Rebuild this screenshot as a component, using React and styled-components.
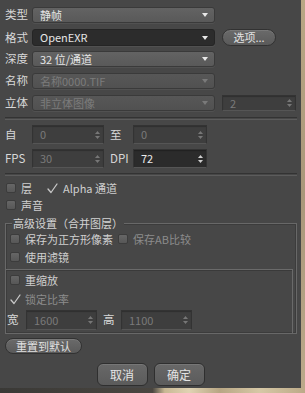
import React from "react";
import styled, { createGlobalStyle } from "styled-components";

const Global = createGlobalStyle`
  html, body { margin: 0; padding: 0; }
  body {
    background: linear-gradient(90deg, #3b3a37 0%, #4a4741 45%, #c9b994 55%, #bda983 80%, #cdbd9a 100%);
    font-family: "Noto Sans CJK SC", "Noto Sans", sans-serif;
    width: 305px; height: 393px; overflow: hidden;
  }
`;

const Page = styled.div`
  width: 305px;
  height: 393px;
  display: flex;
  align-items: flex-start;
`;

const Dialog = styled.div`
  width: 301px;
  height: 388px;
  box-sizing: border-box;
  background: #474747;
  padding: 7px 4px 0 5px;
  display: flex;
  flex-direction: column;
  color: #d6d6d6;
  font-size: 11px;
`;

const Side = styled.div`
  width: 4px;
  height: 388px;
  background: linear-gradient(180deg, #b9a784, #a9977a 50%, #bba98a);
`;

const Row = styled.div`
  display: flex;
  align-items: center;
  height: ${(p) => p.$h || 16}px;
  margin-top: ${(p) => p.$mt || 0}px;
  flex-shrink: 0;
`;

const Label = styled.div`
  width: ${(p) => p.$w || 27}px;
  flex-shrink: 0;
  font-size: 11.5px;
  line-height: 1;
  color: #d8d8d8;
  white-space: nowrap;
  margin-left: ${(p) => p.$ml || 0}px;
`;

const Select = styled.div`
  position: relative;
  width: ${(p) => p.$w || 183}px;
  height: 100%;
  box-sizing: border-box;
  border-radius: 3px;
  border: 1px solid ${(p) => (p.$dark ? "#252525" : "#3a3a3a")};
  background: ${(p) =>
    p.$dark
      ? "#2c2c2c"
      : p.$disabled
      ? "linear-gradient(180deg, #575757, #515151)"
      : "linear-gradient(180deg, #636363, #595959)"};
  box-shadow: 0 1px 0 rgba(255,255,255,0.06);
  display: flex;
  align-items: center;
  padding-left: 7px;
  color: ${(p) => (p.$disabled ? "#7c7c7c" : "#e6e6e6")};
  font-size: 11px;
  line-height: 1;
  &::after {
    content: "";
    position: absolute;
    right: 6px;
    top: 50%;
    margin-top: -2px;
    border-left: 3.5px solid transparent;
    border-right: 3.5px solid transparent;
    border-top: 4px solid ${(p) => (p.$disabled ? "#7a7a7a" : "#e8e8e8")};
  }
`;

const PillButton = styled.div`
  height: 100%;
  box-sizing: border-box;
  width: ${(p) => p.$w}px;
  margin-left: ${(p) => p.$ml || 0}px;
  border-radius: 9px;
  border: 1px solid #323232;
  background: linear-gradient(180deg, #6a6a6a, #5a5a5a);
  box-shadow: inset 0 1px 0 rgba(255,255,255,0.1);
  color: #e2e2e2;
  font-size: 11px;
  display: flex;
  align-items: center;
  justify-content: center;
  line-height: 1;
`;

const Field = styled.div`
  position: relative;
  width: ${(p) => p.$w}px;
  height: 100%;
  box-sizing: border-box;
  margin-left: ${(p) => p.$ml || 0}px;
  background: ${(p) => (p.$dark ? "#2b2b2b" : "#3e3e3e")};
  border: 1px solid #333;
  border-bottom-color: #555;
  box-shadow: inset 0 1px 1px rgba(0,0,0,0.25);
  display: flex;
  align-items: center;
  padding-left: 7px;
  color: ${(p) => (p.$dark ? "#ececec" : "#7a7a7a")};
  font-size: 11px;
  line-height: 1;
`;

const SpinWrap = styled.div`
  position: absolute;
  right: 3px;
  top: 50%;
  transform: translateY(-50%);
  display: flex;
`;

const Spin = ({ light }) => (
  <SpinWrap>
    <svg width="5" height="9" viewBox="0 0 5 9">
      <path d="M0 3.5 L2.5 0.5 L5 3.5 Z" fill={light ? "#cfcfcf" : "#777"} />
      <path d="M0 5.5 L2.5 8.5 L5 5.5 Z" fill={light ? "#cfcfcf" : "#777"} />
    </svg>
  </SpinWrap>
);

const Separator = styled.div`
  height: 1px;
  margin-top: ${(p) => p.$mt || 0}px;
  border-top: 1px solid #333;
  border-bottom: 1px solid #5c5c5c;
  margin-right: 0;
  flex-shrink: 0;
`;

const CheckRow = styled.div`
  display: flex;
  align-items: center;
  height: 14px;
  margin-top: ${(p) => p.$mt || 0}px;
  padding-left: ${(p) => p.$pl || 1}px;
  flex-shrink: 0;
`;

const Box = styled.div`
  width: 10px;
  height: 10px;
  box-sizing: border-box;
  border-radius: 2px;
  border: 1px solid #3c3c3c;
  background: linear-gradient(180deg, #666, #575757);
  flex-shrink: 0;
  margin-left: ${(p) => p.$ml || 0}px;
`;

const Tick = styled.div`
  width: 11px;
  height: 11px;
  flex-shrink: 0;
  margin-left: ${(p) => p.$ml || 0}px;
  display: flex;
`;

const CheckText = styled.span`
  margin-left: ${(p) => p.$ml || 5}px;
  font-size: 11px;
  line-height: 1;
  color: ${(p) => (p.$dim ? "#8c8c8c" : "#cfcfcf")};
  white-space: nowrap;
`;

const Check = ({ ml }) => (
  <Tick $ml={ml}>
    <svg width="11" height="11" viewBox="0 0 11 11">
      <path d="M1 6 L4 9.5 L10 1" fill="none" stroke="#c8c8c8" strokeWidth="1.3" strokeLinecap="round" strokeLinejoin="round" />
    </svg>
  </Tick>
);

const Group = styled.div`
  position: relative;
  margin-top: 11px;
  width: 292px;
  box-sizing: border-box;
  border: 1px solid #686868;
  box-shadow: inset 0 0 0 1px #3c3c3c;
  padding: 8px 0 0 3px;
  display: flex;
  flex-direction: column;
  flex-shrink: 0;
`;

const Legend = styled.div`
  position: absolute;
  left: 6px;
  top: -8px;
  padding: 0 1px;
  background: #474747;
  font-size: 11px;
  line-height: 14px;
  color: #d4d4d4;
`;

const SubBox = styled.div`
  margin-top: 5px;
  margin-left: -3px;
  margin-right: 3px;
  border-top: 1px solid #6a6a6a;
  border-right: 1px solid #6a6a6a;
  box-shadow: inset 0 1px 0 #3a3a3a;
  padding: 3px 0 3px 3px;
  display: flex;
  flex-direction: column;
`;

const ResetButton = styled(PillButton)`
  margin-top: 4px;
  height: 16px;
  width: 77px;
  border-radius: 8px;
  flex-shrink: 0;
`;

const Footer = styled.div`
  display: flex;
  justify-content: center;
  gap: 6px;
  margin-top: 9px;
  padding-right: 0;
  margin-left: -5px;
  margin-right: -4px;
`;

const DialogButton = styled.div`
  width: 51px;
  height: 23px;
  box-sizing: border-box;
  border-radius: 6px;
  border: 1px solid #2f2f2f;
  background: linear-gradient(180deg, #686868, #5b5b5b);
  box-shadow: inset 0 1px 0 rgba(255,255,255,0.1);
  color: #e4e4e4;
  font-size: 12px;
  display: flex;
  align-items: center;
  justify-content: center;
  line-height: 1;
`;

const Bottom = styled.div`
  position: absolute;
  left: 0;
  top: 388px;
  width: 305px;
  height: 5px;
  background: linear-gradient(90deg, #3a3936 0%, #4a4640 50%, #c8b894 54%, #e0d3b3 62%, #b8a684 72%, #d6c8a6 85%, #bcaa88 100%);
`;

export default function App() {
  return (
    <>
      <Global />
      <Page>
        <Dialog>
          <Row>
            <Label>类型</Label>
            <Select>静帧</Select>
          </Row>
          <Row $mt={6} $h={17}>
            <Label>格式</Label>
            <Select $dark>OpenEXR</Select>
            <PillButton $w={54} $ml={7}>选项...</PillButton>
          </Row>
          <Row $mt={5}>
            <Label>深度</Label>
            <Select>32 位/通道</Select>
          </Row>
          <Row $mt={6}>
            <Label>名称</Label>
            <Select $disabled>名称0000.TIF</Select>
          </Row>
          <Row $mt={6}>
            <Label>立体</Label>
            <Select $disabled>非立体图像</Select>
            <Field $w={74} $ml={7}>
              2<Spin />
            </Field>
          </Row>
          <Separator $mt={6} />
          <Row $mt={5} $h={19}>
            <Label>自</Label>
            <Field $w={72}>
              0<Spin />
            </Field>
            <Label $w={23} $ml={6}>至</Label>
            <Field $w={74}>
              0<Spin />
            </Field>
          </Row>
          <Row $mt={5} $h={19}>
            <Label>FPS</Label>
            <Field $w={72}>
              30<Spin />
            </Field>
            <Label $w={23} $ml={6}>DPI</Label>
            <Field $w={74} $dark>
              72<Spin light />
            </Field>
          </Row>
          <Separator $mt={5} />
          <CheckRow $mt={5}>
            <Box />
            <CheckText>层</CheckText>
            <Check ml={15} />
            <CheckText $ml={5}>Alpha 通道</CheckText>
          </CheckRow>
          <CheckRow $mt={3}>
            <Box />
            <CheckText>声音</CheckText>
          </CheckRow>
          <Group>
            <Legend>高级设置（合并图层）</Legend>
            <CheckRow $pl={0}>
              <Box />
              <CheckText>保存为正方形像素</CheckText>
              <Box $ml={5} />
              <CheckText $dim>保存AB比较</CheckText>
            </CheckRow>
            <CheckRow $pl={0} $mt={4}>
              <Box />
              <CheckText>使用滤镜</CheckText>
            </CheckRow>
            <SubBox>
              <CheckRow $pl={0}>
                <Box />
                <CheckText>重缩放</CheckText>
              </CheckRow>
              <CheckRow $pl={0} $mt={5}>
                <Check />
                <CheckText $ml={4} $dim>锁定比率</CheckText>
              </CheckRow>
              <Row $mt={4} $h={20}>
                <Label $w={19} $ml={-2}>宽</Label>
                <Field $w={71}>
                  1600<Spin />
                </Field>
                <Label $w={18} $ml={6}>高</Label>
                <Field $w={71}>
                  1100<Spin />
                </Field>
              </Row>
            </SubBox>
          </Group>
          <ResetButton>重置到默认</ResetButton>
          <Footer>
            <DialogButton>取消</DialogButton>
            <DialogButton>确定</DialogButton>
          </Footer>
        </Dialog>
        <Side />
        <Bottom />
      </Page>
    </>
  );
}
